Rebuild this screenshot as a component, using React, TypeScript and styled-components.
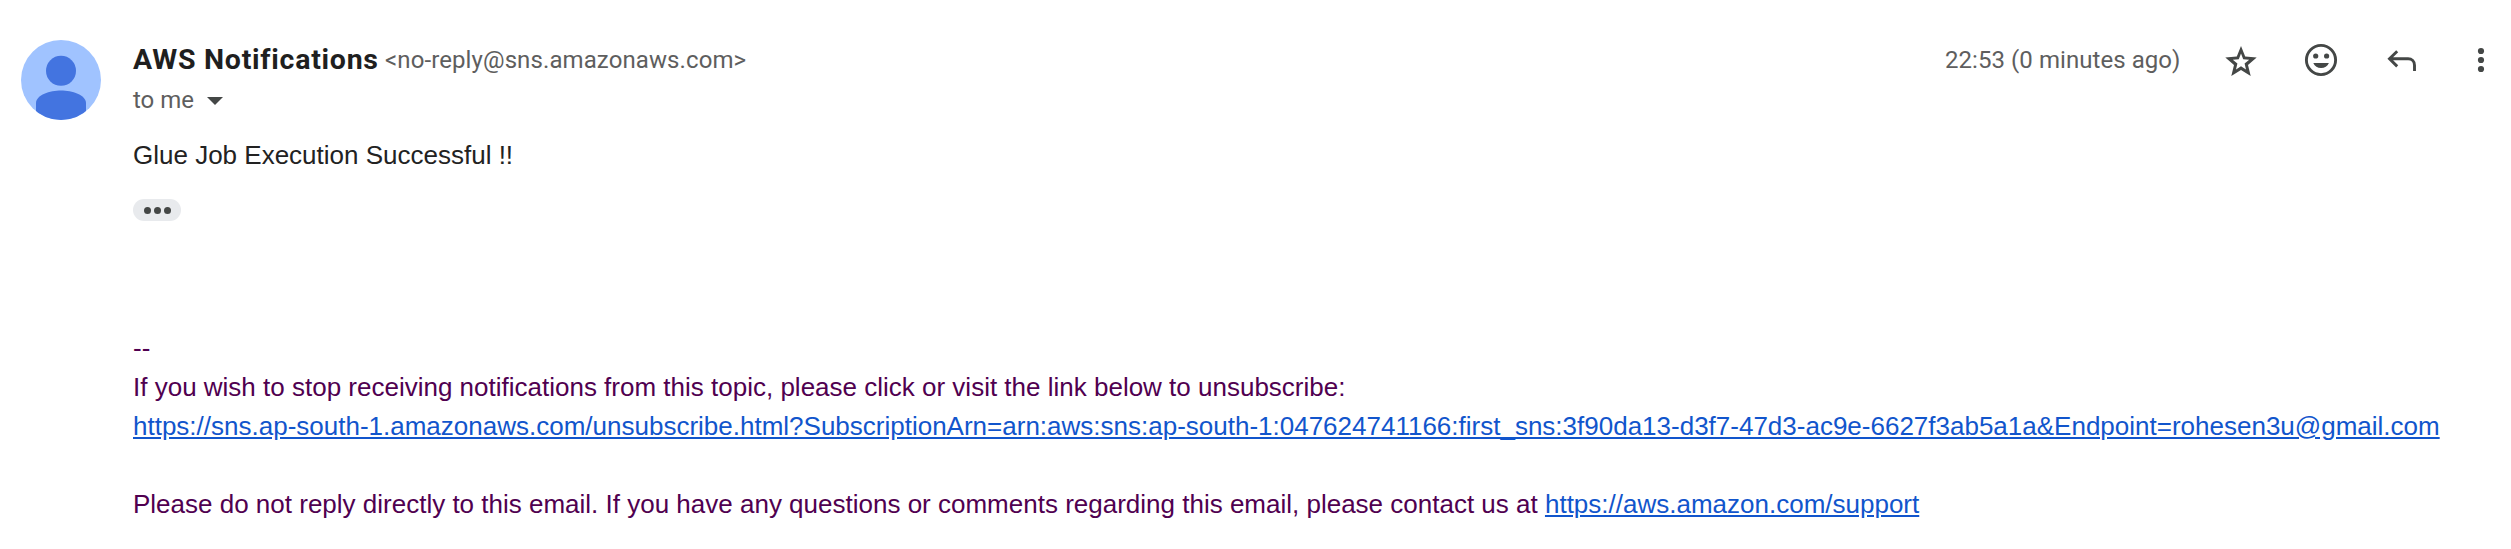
import React from "react";
import styled, { createGlobalStyle } from "styled-components";

const GlobalStyle = createGlobalStyle`
  body { margin: 0; background: #fff; }
`;

const Message = styled.article`
  display: grid;
  grid-template-columns: 80px minmax(0, 1fr);
  column-gap: 32px;
  box-sizing: border-box;
  height: 549px;
  padding: 40px 0 0 21px;
  overflow: hidden;
  background: #fff;
  font-family: "Liberation Sans", Arial, sans-serif;
`;

const Avatar = styled.svg`
  display: block;
  width: 80px;
  height: 80px;
`;

const Content = styled.div`
  min-width: 0;
`;

const Header = styled.header`
  display: flex;
  justify-content: space-between;
  height: 40px;
  font-family: Roboto, sans-serif;
`;

const Sender = styled.div`
  display: flex;
  height: 40px;
  line-height: 40px;
  white-space: nowrap;
`;

const Name = styled.span`
  width: 252px;
  font-size: 28.5px;
  font-weight: 700;
  line-height: 39px;
  letter-spacing: 0.74px;
  color: #1f1f1f;
`;

const Meta = styled.span<{ $spacing?: number }>`
  font-size: 24px;
  letter-spacing: ${(p) => p.$spacing ?? 0}px;
  color: #5e5e5e;
`;

const Tools = styled.div`
  display: flex;
  height: 40px;
  line-height: 40px;
  margin-right: -10px;
  white-space: nowrap;
`;

const DateText = styled(Meta)`
  width: 256px;
`;

const IconButton = styled.button`
  display: flex;
  justify-content: center;
  align-items: center;
  width: 80px;
  height: 40px;
  padding: 0;
  border: 0;
  background: none;
  color: #444746;
`;

const Recipient = styled.div`
  display: flex;
  align-items: center;
  gap: 13px;
  height: 40px;
  font-family: Roboto, sans-serif;
`;

const Caret = styled.span`
  margin-top: 2px;
  border: 8px solid transparent;
  border-top-color: #444746;
  border-bottom: 0;
`;

const Body = styled.div`
  padding-top: 16px;
  font-size: 26px;
  line-height: 39px;
  color: #222;
  white-space: nowrap;
`;

const TrimButton = styled.button`
  display: flex;
  justify-content: center;
  align-items: center;
  gap: 3px;
  width: 48px;
  height: 22px;
  margin: 24px 0 108px;
  padding: 0;
  border: 0;
  border-radius: 11px;
  background: #e8eaed;
`;

const Dot = styled.span`
  width: 7px;
  height: 7px;
  border-radius: 50%;
  background: #444746;
`;

const Line = styled.div`
  min-height: 39px;
`;

const Footer = styled.div`
  color: #500050;
`;

const Link = styled.a`
  color: #15c;
  text-decoration: underline;
`;

const Icon = ({ children }: { children: React.ReactNode }) => (
  <svg width="40" height="40" viewBox="0 0 40 40" fill="none" stroke="currentColor">
    {children}
  </svg>
);

const unsubscribeUrl =
  "https://sns.ap-south-1.amazonaws.com/unsubscribe.html?SubscriptionArn=arn:aws:sns:ap-south-1:047624741166:first_sns:3f90da13-d3f7-47d3-ac9e-6627f3ab5a1a&Endpoint=rohesen3u@gmail.com";

export default function App() {
  return (
    <>
      <GlobalStyle />
      <Message>
        <Avatar viewBox="0 0 80 80">
          <defs>
            <clipPath id="avatar-circle">
              <circle cx="40" cy="40" r="40" />
            </clipPath>
          </defs>
          <g clipPath="url(#avatar-circle)">
            <path d="M0 0h80v80H0z" fill="#a0c3ff" />
            <circle cx="40" cy="30.8" r="15" fill="#4374e0" />
            <path d="M15 80V63C15 55 29 50.5 40 50.5S65 55 65 63v17z" fill="#4374e0" />
          </g>
        </Avatar>
        <Content>
          <Header>
            <Sender>
              <Name>AWS Notifications</Name>
              <Meta $spacing={0.1}>&lt;no-reply@sns.amazonaws.com&gt;</Meta>
            </Sender>
            <Tools>
              <DateText $spacing={0.06}>22:53 (0 minutes ago)</DateText>
              <IconButton aria-label="Star">
                <Icon>
                  <path
                    fill="currentColor"
                    fillRule="evenodd"
                    stroke="none"
                    d="M20 6l4.2 10.4 11.5 1-8.7 7.5 2.7 11L20 30l-9.7 5.9 2.7-11-8.7-7.5 11.5-1zM20 13.6l-2.2 5.6-6 .5 4.6 3.9-1.4 5.8L20 26.3l5 3.1-1.4-5.8 4.6-3.9-6-.5z"
                  />
                </Icon>
              </IconButton>
              <IconButton aria-label="Add reaction">
                <Icon>
                  <circle cx="20" cy="20" r="14.6" strokeWidth="2.9" />
                  <g fill="currentColor" stroke="none">
                    <circle cx="14.7" cy="16" r="2.6" />
                    <circle cx="25.6" cy="16" r="2.6" />
                    <path d="M12.3 23h15.6c-1.5 3.3-4.2 5.1-7.8 5.1s-6.3-1.8-7.8-5.1z" />
                  </g>
                </Icon>
              </IconButton>
              <IconButton aria-label="Reply">
                <Icon>
                  <path
                    strokeWidth="2.9"
                    d="M16.2 11.2l-7.7 7.6 7.7 7.6M8.8 18.8h18.3c3.7 0 6.4 2.7 6.4 6.4V31"
                  />
                </Icon>
              </IconButton>
              <IconButton aria-label="More">
                <Icon>
                  <g fill="currentColor" stroke="none">
                    <circle cx="20" cy="11" r="3.1" />
                    <circle cx="20" cy="20" r="3.1" />
                    <circle cx="20" cy="29" r="3.1" />
                  </g>
                </Icon>
              </IconButton>
            </Tools>
          </Header>
          <Recipient>
            <Meta>to me</Meta>
            <Caret />
          </Recipient>
          <Body>
            <Line>Glue Job Execution Successful !!</Line>
            <TrimButton aria-label="Show trimmed content">
              <Dot />
              <Dot />
              <Dot />
            </TrimButton>
            <Footer>
              <Line>--</Line>
              <Line>
                If you wish to stop receiving notifications from this topic, please click or visit the link below to
                unsubscribe:
              </Line>
              <Line>
                <Link href={unsubscribeUrl}>{unsubscribeUrl}</Link>
              </Line>
              <Line />
              <Line>
                Please do not reply directly to this email. If you have any questions or comments regarding this email,
                please contact us at <Link href="https://aws.amazon.com/support">https://aws.amazon.com/support</Link>
              </Line>
            </Footer>
          </Body>
        </Content>
      </Message>
    </>
  );
}
